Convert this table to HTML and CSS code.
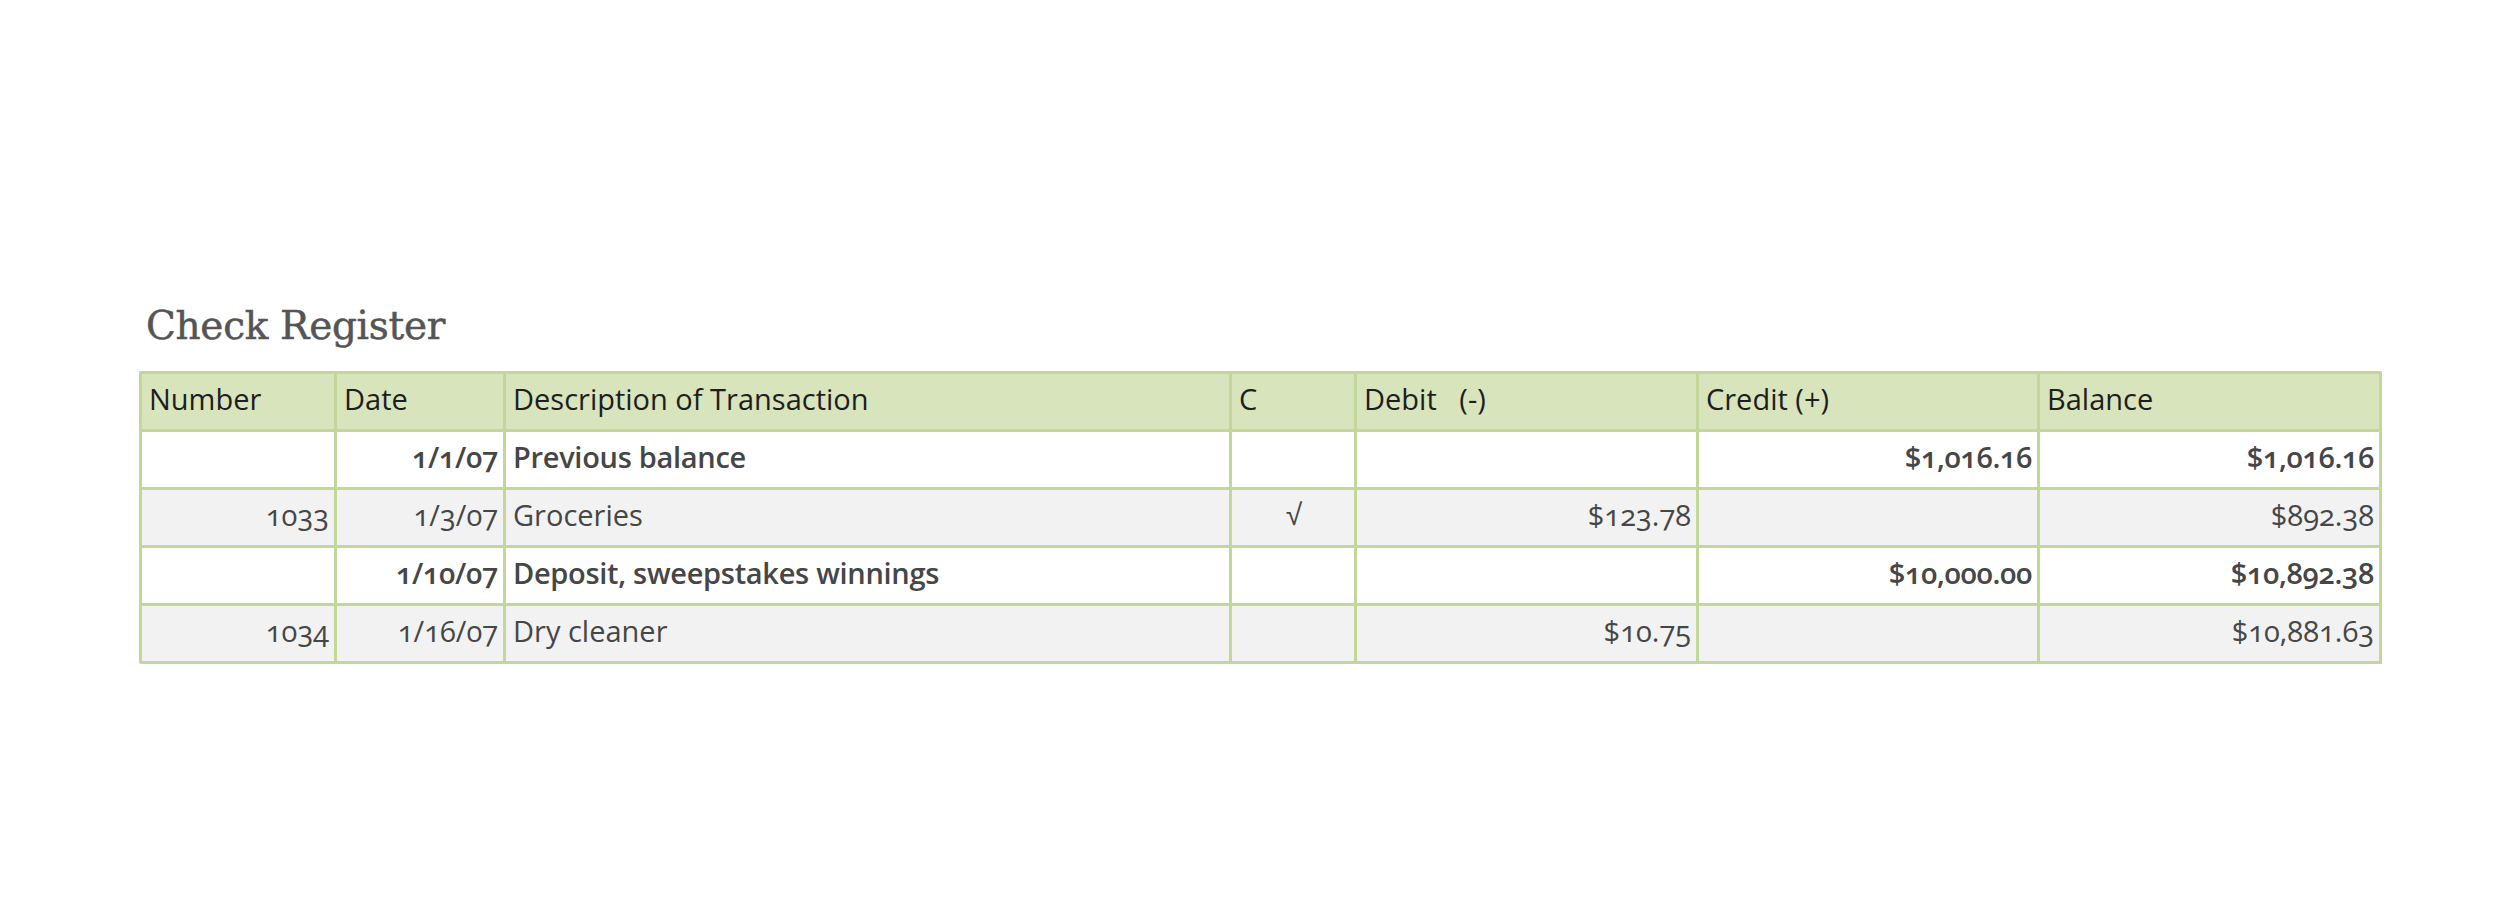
FILE: index.html
```html
<!DOCTYPE html>
<html lang="en">
<head>
<meta charset="utf-8">
<title>Check Register</title>
<link rel="stylesheet" href="styles.css">
</head>
<body>
<main class="page">
  <h1 class="title">Check Register</h1>
  <div class="register" role="table">
    <div class="row head" role="row">
      <div class="cell" role="columnheader">Number</div>
      <div class="cell" role="columnheader">Date</div>
      <div class="cell" role="columnheader">Description of Transaction</div>
      <div class="cell" role="columnheader">C</div>
      <div class="cell pre" role="columnheader">Debit   (-)</div>
      <div class="cell" role="columnheader">Credit (+)</div>
      <div class="cell" role="columnheader">Balance</div>
    </div>
    <div class="row strong" role="row">
      <div class="cell num" role="cell"></div>
      <div class="cell num" role="cell">1/1/07</div>
      <div class="cell" role="cell">Previous balance</div>
      <div class="cell mid" role="cell"></div>
      <div class="cell num" role="cell"></div>
      <div class="cell num" role="cell">$1,016.16</div>
      <div class="cell num" role="cell">$1,016.16</div>
    </div>
    <div class="row alt" role="row">
      <div class="cell num" role="cell">1033</div>
      <div class="cell num" role="cell">1/3/07</div>
      <div class="cell" role="cell">Groceries</div>
      <div class="cell mid check" role="cell">√</div>
      <div class="cell num" role="cell">$123.78</div>
      <div class="cell num" role="cell"></div>
      <div class="cell num" role="cell">$892.38</div>
    </div>
    <div class="row strong" role="row">
      <div class="cell num" role="cell"></div>
      <div class="cell num" role="cell">1/10/07</div>
      <div class="cell" role="cell">Deposit, sweepstakes winnings</div>
      <div class="cell mid" role="cell"></div>
      <div class="cell num" role="cell"></div>
      <div class="cell num" role="cell">$10,000.00</div>
      <div class="cell num" role="cell">$10,892.38</div>
    </div>
    <div class="row alt" role="row">
      <div class="cell num" role="cell">1034</div>
      <div class="cell num" role="cell">1/16/07</div>
      <div class="cell" role="cell">Dry cleaner</div>
      <div class="cell mid" role="cell"></div>
      <div class="cell num" role="cell">$10.75</div>
      <div class="cell num" role="cell"></div>
      <div class="cell num" role="cell">$10,881.63</div>
    </div>
  </div>
</main>
</body>
</html>
```

FILE: styles.css
```css
html, body {
  margin: 0;
  padding: 0;
  background: #ffffff;
}

.page {
  padding: 306px 0 0 139px;
}

.title {
  margin: 0 0 25px 7px;
  font-family: "DejaVu Serif", "Liberation Serif", serif;
  font-weight: normal;
  font-size: 39px;
  line-height: 40px;
  letter-spacing: -0.3px;
  color: #555555;
  -webkit-text-stroke: 0.5px #555555;
}

.register {
  width: max-content;
  border-left: 3px solid #c4d79b;
  border-top: 3px solid #c4d79b;
  border-radius: 2px;
  font-family: "Open Sans", Lato, "DejaVu Sans", sans-serif;
  font-size: 29px;
  font-variant-numeric: oldstyle-nums;
  color: #464646;
}

.row {
  display: grid;
  grid-template-columns: 195px 169px 726px 125px 342px 341px 342px;
  background: #ffffff;
}

.row.head {
  background: #d8e4bc;
  color: #1e1e1e;
}

.row.alt {
  background: #f2f2f2;
}

.row.strong {
  font-weight: 600;
  letter-spacing: -0.3px;
}

.cell {
  box-sizing: border-box;
  height: 58px;
  padding: 8px 5px 0 7px;
  line-height: 33px;
  border-right: 3px solid #c4d79b;
  border-bottom: 3px solid #c4d79b;
  white-space: nowrap;
  overflow: hidden;
}

.cell.num {
  text-align: right;
}

.cell.mid {
  text-align: center;
}

.cell.pre {
  white-space: pre;
}

.check {
  font-family: "DejaVu Sans", sans-serif;
  font-weight: 300;
  font-size: 30px;
}
```
